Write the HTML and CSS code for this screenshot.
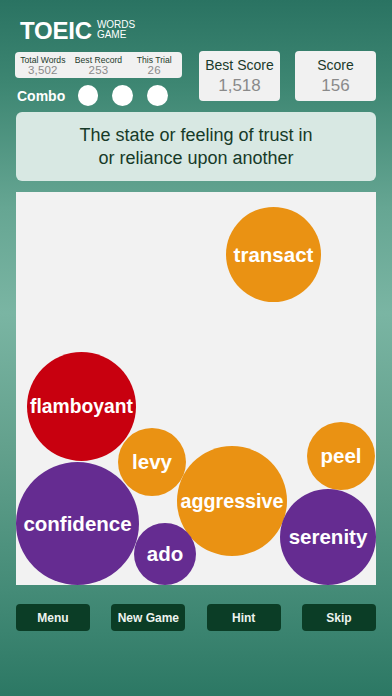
FILE: index.html
```html
<!DOCTYPE html>
<html>
<head>
<meta charset="utf-8">
<link rel="stylesheet" href="styles.css">
</head>
<body>
<div class="screen">
  <header class="top">
    <div class="left">
      <div class="title">
        <span class="toeic">TOEIC</span>
        <span class="sub">WORDS<br>GAME</span>
      </div>
      <div class="stats">
        <div class="stat"><div class="lab">Total Words</div><div class="val">3,502</div></div>
        <div class="stat"><div class="lab">Best Record</div><div class="val">253</div></div>
        <div class="stat"><div class="lab">This Trial</div><div class="val">26</div></div>
      </div>
      <div class="combo">
        <span class="combo-label">Combo</span>
        <span class="dot"></span>
        <span class="dot"></span>
        <span class="dot"></span>
      </div>
    </div>
    <div class="right">
      <div class="score-box"><div class="score-lab">Best Score</div><div class="score-val">1,518</div></div>
      <div class="score-box"><div class="score-lab">Score</div><div class="score-val">156</div></div>
    </div>
  </header>
  <div class="definition">The state or feeling of trust in<br>or reliance upon another</div>
  <div class="board">
    <div class="bubble orange" style="left:210px;top:15px;width:95px;height:95px">transact</div>
    <div class="bubble red narrow" style="left:11px;top:160px;width:109px;height:109px">flamboyant</div>
    <div class="bubble orange" style="left:102px;top:236px;width:68px;height:68px">levy</div>
    <div class="bubble orange narrow2" style="left:161px;top:254px;width:110px;height:110px">aggressive</div>
    <div class="bubble orange" style="left:291px;top:230px;width:68px;height:68px">peel</div>
    <div class="bubble purple" style="left:0px;top:270px;width:123px;height:123px">confidence</div>
    <div class="bubble purple" style="left:118px;top:331px;width:62px;height:62px">ado</div>
    <div class="bubble purple" style="left:264px;top:297px;width:96px;height:96px">serenity</div>
  </div>
  <nav class="buttons">
    <div class="btn">Menu</div>
    <div class="btn">New Game</div>
    <div class="btn">Hint</div>
    <div class="btn">Skip</div>
  </nav>
</div>
</body>
</html>
```
FILE: styles.css
```css
* { box-sizing: border-box; }
html, body { margin: 0; padding: 0; }
body {
  width: 392px;
  height: 696px;
  overflow: hidden;
  font-family: "Liberation Sans", Arial, sans-serif;
  background: linear-gradient(180deg, #2a7362 0%, #3d8672 12%, #66a693 30%, #7ab5a3 45%, #62a08c 65%, #448b77 85%, #2c7864 100%);
}
.screen {
  width: 392px;
  height: 696px;
  padding: 0 16px;
}
.top {
  display: flex;
  justify-content: space-between;
}
.left {
  width: 167px;
  margin-left: -1px;
}
.title {
  display: flex;
  align-items: flex-start;
  padding-top: 19px;
  padding-left: 5px;
  height: 52px;
  color: #fff;
}
.toeic {
  font-size: 24px;
  line-height: 24px;
  font-weight: bold;
  letter-spacing: -0.2px;
}
.sub {
  font-size: 10px;
  line-height: 10px;
  margin-left: 5px;
  margin-top: 1px;
}
.stats {
  display: flex;
  height: 26px;
  background: #f1f1f1;
  border-radius: 4px;
  padding-top: 3px;
}
.stat {
  flex: 1;
  text-align: center;
}
.lab {
  font-size: 8.6px;
  line-height: 10px;
  color: #1d3b2c;
}
.val {
  font-size: 11.5px;
  line-height: 11px;
  color: #8a8a8a;
  letter-spacing: 0.2px;
}
.combo {
  display: flex;
  align-items: center;
  margin-top: 7px;
  padding-left: 2px;
}
.combo-label {
  font-size: 14px;
  font-weight: bold;
  color: #fff;
  width: 61px;
}
.dot {
  width: 21px;
  height: 21px;
  border-radius: 50%;
  background: #fff;
  margin-right: 14px;
}
.right {
  display: flex;
  gap: 15px;
  padding-top: 51px;
}
.score-box {
  width: 81px;
  height: 50px;
  background: #f1f1f1;
  border-radius: 4px;
  text-align: center;
  padding-top: 6px;
}
.score-lab {
  font-size: 14px;
  line-height: 16px;
  color: #1b3a2b;
}
.score-val {
  font-size: 17px;
  line-height: 20px;
  margin-top: 3px;
  color: #8a8a8a;
}
.definition {
  margin-top: 6px;
  height: 69px;
  background: #d8e8e3;
  border-radius: 6px;
  display: flex;
  align-items: center;
  justify-content: center;
  text-align: center;
  font-size: 18px;
  line-height: 22.5px;
  color: #163a28;
}
.board {
  position: relative;
  margin-top: 11px;
  height: 393px;
  background: #f2f2f2;
  overflow: hidden;
}
.bubble {
  position: absolute;
  border-radius: 50%;
  display: flex;
  align-items: center;
  justify-content: center;
  color: #fff;
  font-weight: bold;
  font-size: 20.5px;
  white-space: nowrap;
}
.bubble.narrow { font-size: 19.3px; }
.bubble.narrow2 { font-size: 19.7px; }
.orange { background: #ea9213; }
.red { background: #c8000f; }
.purple { background: #652c91; }
.buttons {
  display: flex;
  justify-content: space-between;
  margin-top: 19px;
}
.btn {
  width: 74px;
  height: 27px;
  background: #0b3d26;
  border-radius: 4px;
  color: #edf3ef;
  font-size: 12px;
  font-weight: bold;
  display: flex;
  align-items: center;
  justify-content: center;
}
```
